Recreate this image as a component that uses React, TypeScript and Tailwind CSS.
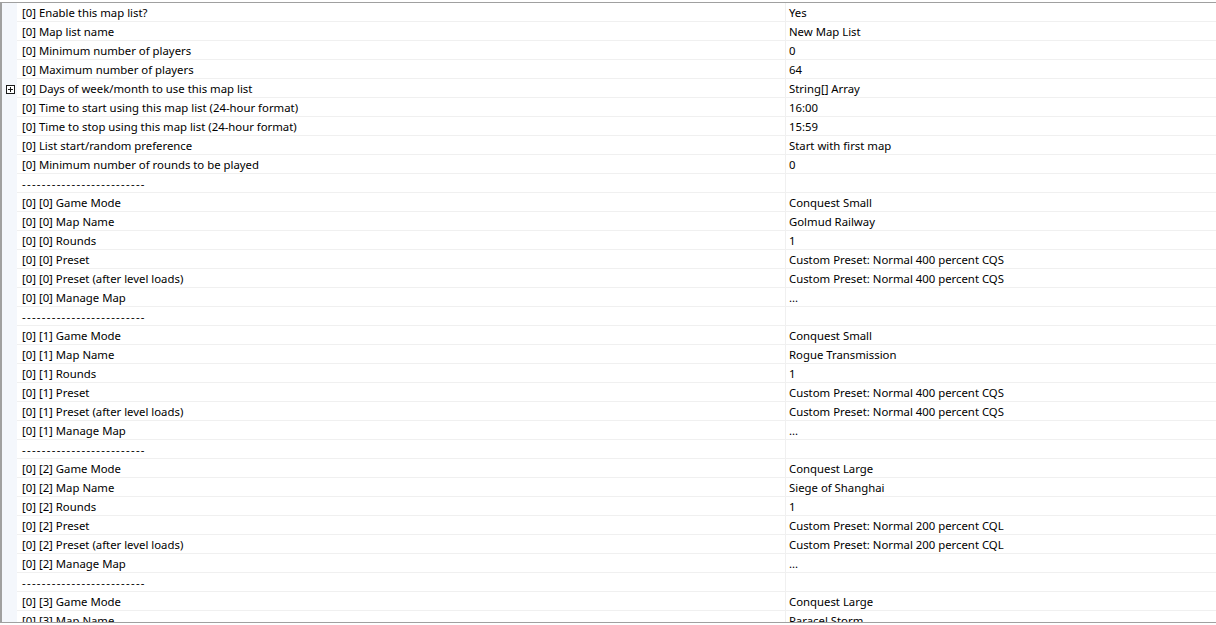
import React from 'react';

type Row = { label: string; value: string; expandable?: boolean };

const SEP = '-------------------------';

const mapEntry = (idx: number, mode: string, name: string, preset: string): Row[] => [
  { label: `[0] [${idx}] Game Mode`, value: mode },
  { label: `[0] [${idx}] Map Name`, value: name },
  { label: `[0] [${idx}] Rounds`, value: '1' },
  { label: `[0] [${idx}] Preset`, value: preset },
  { label: `[0] [${idx}] Preset (after level loads)`, value: preset },
  { label: `[0] [${idx}] Manage Map`, value: '...' },
  { label: SEP, value: '' },
];

const ROWS: Row[] = [
  { label: '[0] Enable this map list?', value: 'Yes' },
  { label: '[0] Map list name', value: 'New Map List' },
  { label: '[0] Minimum number of players', value: '0' },
  { label: '[0] Maximum number of players', value: '64' },
  { label: '[0] Days of week/month to use this map list', value: 'String[] Array', expandable: true },
  { label: '[0] Time to start using this map list (24-hour format)', value: '16:00' },
  { label: '[0] Time to stop using this map list (24-hour format)', value: '15:59' },
  { label: '[0] List start/random preference', value: 'Start with first map' },
  { label: '[0] Minimum number of rounds to be played', value: '0' },
  { label: SEP, value: '' },
  ...mapEntry(0, 'Conquest Small', 'Golmud Railway', 'Custom Preset: Normal 400 percent CQS'),
  ...mapEntry(1, 'Conquest Small', 'Rogue Transmission', 'Custom Preset: Normal 400 percent CQS'),
  ...mapEntry(2, 'Conquest Large', 'Siege of Shanghai', 'Custom Preset: Normal 200 percent CQL'),
  { label: '[0] [3] Game Mode', value: 'Conquest Large' },
  { label: '[0] [3] Map Name', value: 'Paracel Storm' },
  { label: '[0] [3] Rounds', value: '1' },
];

const PlusBox = () => (
  <svg width="9" height="9" viewBox="0 0 9 9" className="block">
    <rect x="0.5" y="0.5" width="8" height="8" fill="white" stroke="#1a1a1a" />
    <path d="M2 4.5h5M4.5 2v5" stroke="#1a1a1a" />
  </svg>
);

export default function App() {
  return (
    <div className="w-[1216px] h-[625px] bg-white overflow-hidden font-['Noto_Sans',sans-serif] text-[11.35px] text-black">
      <div className="mt-[2px] h-[621px] border-t border-b border-l-2 border-[#a0a0a0] overflow-hidden">
        {ROWS.map((row, i) => (
          <div key={i} className="flex h-[19px]">
            <div className="w-[15px] shrink-0 bg-[#f4f7fc] flex items-center justify-center pl-[2px] pt-[1px]">
              {row.expandable && <PlusBox />}
            </div>
            <div
              className={`w-[769px] shrink-0 border-b border-r border-[#f0f0f0] pl-[5px] pt-[1px] leading-[18px] whitespace-nowrap overflow-hidden ${
                row.label === SEP ? 'tracking-[1.3px]' : ''
              }`}
            >
              {row.label}
            </div>
            <div className="flex-1 border-b border-[#f0f0f0] pl-[3px] pt-[1px] leading-[18px] whitespace-nowrap overflow-hidden">
              {row.value}
            </div>
          </div>
        ))}
      </div>
    </div>
  );
}
